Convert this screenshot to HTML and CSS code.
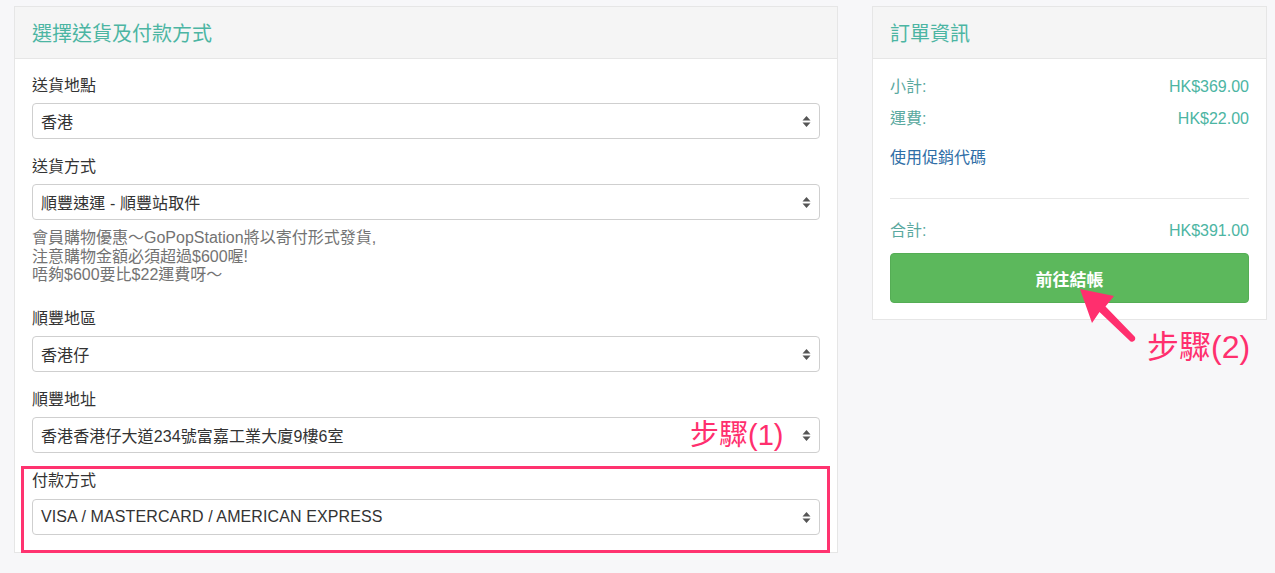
FILE: index.html
```html
<!DOCTYPE html>
<html lang="zh-Hant">
<head>
<meta charset="utf-8">
<title>選擇送貨及付款方式</title>
<link rel="stylesheet" href="styles.css">
</head>
<body>
<div class="page">
  <section class="panel panel-main">
    <header class="panel-head"><h2 class="panel-title">選擇送貨及付款方式</h2></header>
    <div class="panel-body">
      <div class="group">
        <div class="label">送貨地點</div>
        <div class="select"><span class="select-text">香港</span><svg class="caret" width="9" height="13" viewBox="0 0 9 13"><path d="M4.5 1 L8.5 5.5 H0.5 Z M0.5 7.5 H8.5 L4.5 12 Z" fill="#555"/></svg></div>
      </div>
      <div class="group">
        <div class="label">送貨方式</div>
        <div class="select"><span class="select-text">順豐速運 - 順豐站取件</span><svg class="caret" width="9" height="13" viewBox="0 0 9 13"><path d="M4.5 1 L8.5 5.5 H0.5 Z M0.5 7.5 H8.5 L4.5 12 Z" fill="#555"/></svg></div>
        <p class="help">會員購物優惠～GoPopStation將以寄付形式發貨,<br>注意購物金額必須超過$600喔!<br>唔夠$600要比$22運費呀～</p>
      </div>
      <div class="group">
        <div class="label">順豐地區</div>
        <div class="select"><span class="select-text">香港仔</span><svg class="caret" width="9" height="13" viewBox="0 0 9 13"><path d="M4.5 1 L8.5 5.5 H0.5 Z M0.5 7.5 H8.5 L4.5 12 Z" fill="#555"/></svg></div>
      </div>
      <div class="group">
        <div class="label">順豐地址</div>
        <div class="select"><span class="select-text">香港香港仔大道234號富嘉工業大廈9樓6室</span><svg class="caret" width="9" height="13" viewBox="0 0 9 13"><path d="M4.5 1 L8.5 5.5 H0.5 Z M0.5 7.5 H8.5 L4.5 12 Z" fill="#555"/></svg></div>
      </div>
      <div class="group group-last">
        <div class="label label-last">付款方式</div>
        <div class="select"><span class="select-text">VISA / MASTERCARD / AMERICAN EXPRESS</span><svg class="caret" width="9" height="13" viewBox="0 0 9 13"><path d="M4.5 1 L8.5 5.5 H0.5 Z M0.5 7.5 H8.5 L4.5 12 Z" fill="#555"/></svg></div>
        <div class="highlight"></div>
      </div>
    </div>
  </section>

  <section class="panel panel-side">
    <header class="panel-head"><h2 class="panel-title">訂單資訊</h2></header>
    <div class="panel-body side-body">
      <div class="row"><span class="row-label">小計:</span><span class="amount">HK$369.00</span></div>
      <div class="row"><span class="row-label">運費:</span><span class="amount">HK$22.00</span></div>
      <a class="promo" href="#">使用促銷代碼</a>
      <hr class="divider">
      <div class="row"><span class="row-label">合計:</span><span class="amount">HK$391.00</span></div>
      <button class="checkout" type="button">前往結帳</button>
    </div>
  </section>
</div>

<div class="note note-1">步驟(1)</div>
<div class="note note-2">步驟(2)</div>
<svg class="arrow" width="80" height="70" viewBox="1072 282 80 70">
  <path d="M1080 289 L1114 296 L1105.5 306.5 L1135 337 Q1136 340 1133 341.5 Q1131 342.5 1129.5 340.5 L1099.5 312 L1092 323 Z" fill="#ff2f6e"/>
</svg>
</body>
</html>
```

FILE: styles.css
```css
* { box-sizing: border-box; }

html, body {
  margin: 0;
  padding: 0;
  background: #f7f7f9;
  font-family: "Liberation Sans", "Noto Sans CJK TC", sans-serif;
  font-size: 16px;
  color: #333;
}

.page {
  display: flex;
  align-items: flex-start;
  gap: 34px;
  padding: 6px 8px 0 14px;
}

.panel {
  background: #fff;
  border: 1px solid #e6e6e6;
}

.panel-main { width: 824px; }
.panel-side { width: 395px; }

.panel-head {
  height: 52px;
  background: #f5f5f5;
  border-bottom: 1px solid #e6e6e6;
  padding: 0 17px;
  display: flex;
  align-items: center;
}

.panel-title {
  margin: 0;
  font-size: 20px;
  font-weight: normal;
  color: #4cb5a3;
}

.panel-body {
  padding: 17px;
}

.group { margin-bottom: 18px; }
.group-last { margin-bottom: 0; position: relative; }

.label {
  height: 20px;
  line-height: 20px;
  margin-bottom: 7px;
  color: #333;
}

.label-last { margin-bottom: 8px; }

.select {
  height: 36px;
  border: 1px solid #cfcfcf;
  border-radius: 4px;
  display: flex;
  align-items: center;
  justify-content: space-between;
  padding: 0 8px;
  background: #fff;
  color: #333;
}

.select-text { white-space: nowrap; letter-spacing: 0.1px; }

.caret { flex: none; }

.help {
  margin: 9px 0 24px;
  line-height: 18.7px;
  color: #737373;
}

.highlight {
  position: absolute;
  left: -11px;
  right: -10px;
  top: -5px;
  bottom: -18px;
  border: 3px solid #ff3370;
  pointer-events: none;
}

.side-body { padding-top: 18px; padding-bottom: 16px; }

.row {
  display: flex;
  justify-content: space-between;
  height: 20px;
  line-height: 20px;
  margin-bottom: 12px;
}

.row-label { color: #5aa9a0; }
.amount { color: #4cb5a3; }

.promo {
  display: block;
  height: 20px;
  line-height: 20px;
  margin-top: 19px;
  color: #2f6ea6;
  text-decoration: none;
}

.divider {
  border: 0;
  border-top: 1px solid #e8e8e8;
  margin: 30px 0 22px;
}

.checkout {
  display: block;
  width: 100%;
  height: 50px;
  margin-top: 12px;
  background: #5cb85c;
  border: 1px solid #55ad55;
  border-radius: 4px;
  color: #fff;
  font-family: "Liberation Sans", "Noto Sans CJK TC", sans-serif;
  font-size: 17px;
  font-weight: bold;
}

.note {
  position: absolute;
  color: #ff2f6e;
  font-family: "Liberation Sans", "Noto Sans CJK TC", sans-serif;
  white-space: nowrap;
  line-height: 1;
}

.note-1 {
  left: 690px;
  top: 421px;
  font-size: 29px;
}

.note-2 {
  left: 1147px;
  top: 331px;
  font-size: 32px;
}

.arrow {
  position: absolute;
  left: 1072px;
  top: 282px;
}
```
